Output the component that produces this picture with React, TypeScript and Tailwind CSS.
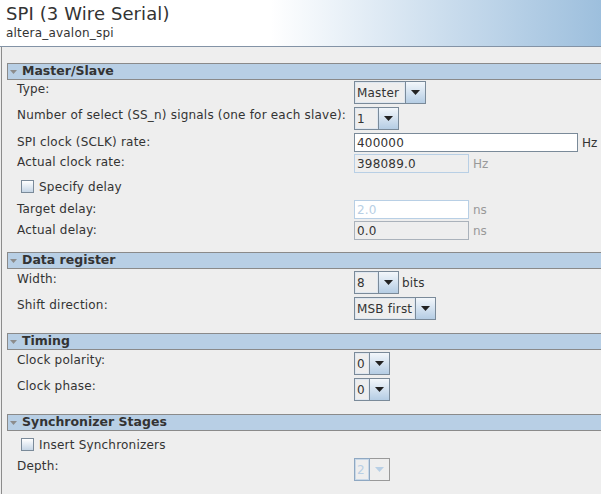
import type { ReactNode } from 'react';

function SectionHeader({ title }: { title: string }) {
  return (
    <div className="flex h-[17px] items-center border-y border-l border-[#8a8a8a] bg-[#b8cfe5] pl-[2px]">
      <svg width="7" height="4" viewBox="0 0 7 4" className="mr-[5px]">
        <polygon points="0,0 7,0 3.5,4" fill="#8c8c8c" />
      </svg>
      <span className="text-[12.5px] font-bold leading-none text-[#333]">{title}</span>
    </div>
  );
}

function Row({ label, h, pad, children }: { label: string; h: string; pad: string; children: ReactNode }) {
  return (
    <div className={`flex items-start ${h}`}>
      <div className={`w-[347px] pl-[10px] text-[12px] leading-[14px] tracking-[0.2px] text-[#333] ${pad}`}>{label}</div>
      <div className="flex items-center">{children}</div>
    </div>
  );
}

function Arrow({ color }: { color: string }) {
  return (
    <svg width="9" height="5" viewBox="0 0 9 5">
      <polygon points="0,0 9,0 4.5,5" fill={color} />
    </svg>
  );
}

function Combo({ value, w, disabled }: { value: string; w: string; disabled?: boolean }) {
  if (disabled) {
    return (
      <div className={`flex h-[23px] ${w}`}>
        <div className="flex flex-1 items-center border border-[#8fa8c2] bg-[#eeeeee] pl-[2px] text-[12px] text-[#b8cfe5] shadow-[inset_0_0_0_1px_#c8d8e8]">
          {value}
        </div>
        <div className="flex w-[20px] items-center justify-center border border-l-0 border-[#999999] bg-[#eeeeee]">
          <Arrow color="#b8cfe5" />
        </div>
      </div>
    );
  }
  return (
    <div className={`flex h-[23px] border border-[#7a8a99] ${w}`}>
      <div className="flex flex-1 items-center bg-[#eeeeee] pl-[2px] text-[12px] tracking-[0.2px] text-[#333] shadow-[inset_0_0_0_1px_#dfe7f0]">
        {value}
      </div>
      <div className="flex w-[20px] items-center justify-center border-l border-[#7a8a99] bg-gradient-to-b from-[#f3f7fb] to-[#b5cde4]">
        <Arrow color="#222" />
      </div>
    </div>
  );
}

function Field({ value, w, kind }: { value: string; w: string; kind: 'edit' | 'readonly' | 'disabled' | 'plain' }) {
  const look =
    kind === 'edit'
      ? 'bg-white border-[#7a8a99] text-[#333]'
      : kind === 'readonly'
        ? 'bg-[#eeeeee] border-[#b8cfe5] text-[#333]'
        : kind === 'disabled'
          ? 'bg-white border-[#b8cfe5] text-[#b8cfe5]'
          : 'bg-[#eeeeee] border-[#aab2bb] text-[#333]';
  return (
    <div className={`flex h-[19px] items-center border pl-[2px] text-[12px] tracking-[0.2px] ${look} ${w}`}>{value}</div>
  );
}

function Check({ label }: { label: string }) {
  return (
    <div className="flex h-[27px] items-center pl-[14px]">
      <div className="h-[13px] w-[13px] border border-[#7a8a99] bg-gradient-to-b from-white to-[#c6d6e6]" />
      <span className="ml-[5px] text-[12px] tracking-[0.2px] text-[#333]">{label}</span>
    </div>
  );
}

export default function App() {
  return (
    <div className="h-[494px] w-[601px] overflow-hidden bg-[#eeeeee] font-['DejaVu_Sans',sans-serif]">
      <div className="h-[47px] border-b border-[#8393a6] bg-gradient-to-r from-white from-[45%] to-[#9dbfdd] px-[6px] pt-[3px]">
        <div className="text-[18px] leading-[22px] tracking-[0.1px] text-[#333]">SPI (3 Wire Serial)</div>
        <div className="text-[12px] leading-[16px] tracking-[0.2px] text-[#333]">altera_avalon_spi</div>
      </div>

      <div className="ml-[1px] h-[447px] border-l border-[#8c8c8c] pl-[5px]">
        <div className="pt-[16px]">
          <SectionHeader title="Master/Slave" />
          <div className="pt-[1px]">
            <Row label="Type:" h="h-[23px]" pad="pt-[1px]">
              <Combo value="Master" w="w-[72px]" />
            </Row>
            <div className="mt-[3px]">
              <Row label="Number of select (SS_n) signals (one for each slave):" h="h-[23px]" pad="pt-[1px]">
                <Combo value="1" w="w-[45px]" />
              </Row>
            </div>
            <div className="mt-[3px]">
              <Row label="SPI clock (SCLK) rate:" h="h-[19px]" pad="pt-[2px]">
                <Field value="400000" w="w-[224px]" kind="edit" />
                <span className="ml-[4px] text-[12px] text-[#333]">Hz</span>
              </Row>
            </div>
            <div className="mt-[2px]">
              <Row label="Actual clock rate:" h="h-[19px]" pad="pt-[1px]">
                <Field value="398089.0" w="w-[115px]" kind="readonly" />
                <span className="ml-[4px] text-[12px] text-[#999]">Hz</span>
              </Row>
            </div>
            <Check label="Specify delay" />
            <Row label="Target delay:" h="h-[19px]" pad="pt-[2px]">
              <Field value="2.0" w="w-[115px]" kind="disabled" />
              <span className="ml-[4px] text-[12px] text-[#999]">ns</span>
            </Row>
            <div className="mt-[2px]">
              <Row label="Actual delay:" h="h-[19px]" pad="pt-[2px]">
                <Field value="0.0" w="w-[115px]" kind="plain" />
                <span className="ml-[4px] text-[12px] text-[#999]">ns</span>
              </Row>
            </div>
          </div>
        </div>

        <div className="pt-[12px]">
          <SectionHeader title="Data register" />
          <div className="pt-[2px]">
            <Row label="Width:" h="h-[23px]" pad="pt-[1px]">
              <Combo value="8" w="w-[45px]" />
              <span className="ml-[3px] text-[12px] tracking-[0.2px] text-[#333]">bits</span>
            </Row>
            <div className="mt-[3px]">
              <Row label="Shift direction:" h="h-[23px]" pad="pt-[1px]">
                <Combo value="MSB first" w="w-[82px]" />
              </Row>
            </div>
          </div>
        </div>

        <div className="pt-[13px]">
          <SectionHeader title="Timing" />
          <div className="pt-[2px]">
            <Row label="Clock polarity:" h="h-[23px]" pad="pt-[1px]">
              <Combo value="0" w="w-[36px]" />
            </Row>
            <div className="mt-[3px]">
              <Row label="Clock phase:" h="h-[23px]" pad="pt-[1px]">
                <Combo value="0" w="w-[36px]" />
              </Row>
            </div>
          </div>
        </div>

        <div className="pt-[13px]">
          <SectionHeader title="Synchronizer Stages" />
          <Check label="Insert Synchronizers" />
          <Row label="Depth:" h="h-[23px]" pad="pt-[1px]">
            <Combo value="2" w="w-[36px]" disabled />
          </Row>
        </div>
      </div>
    </div>
  );
}
